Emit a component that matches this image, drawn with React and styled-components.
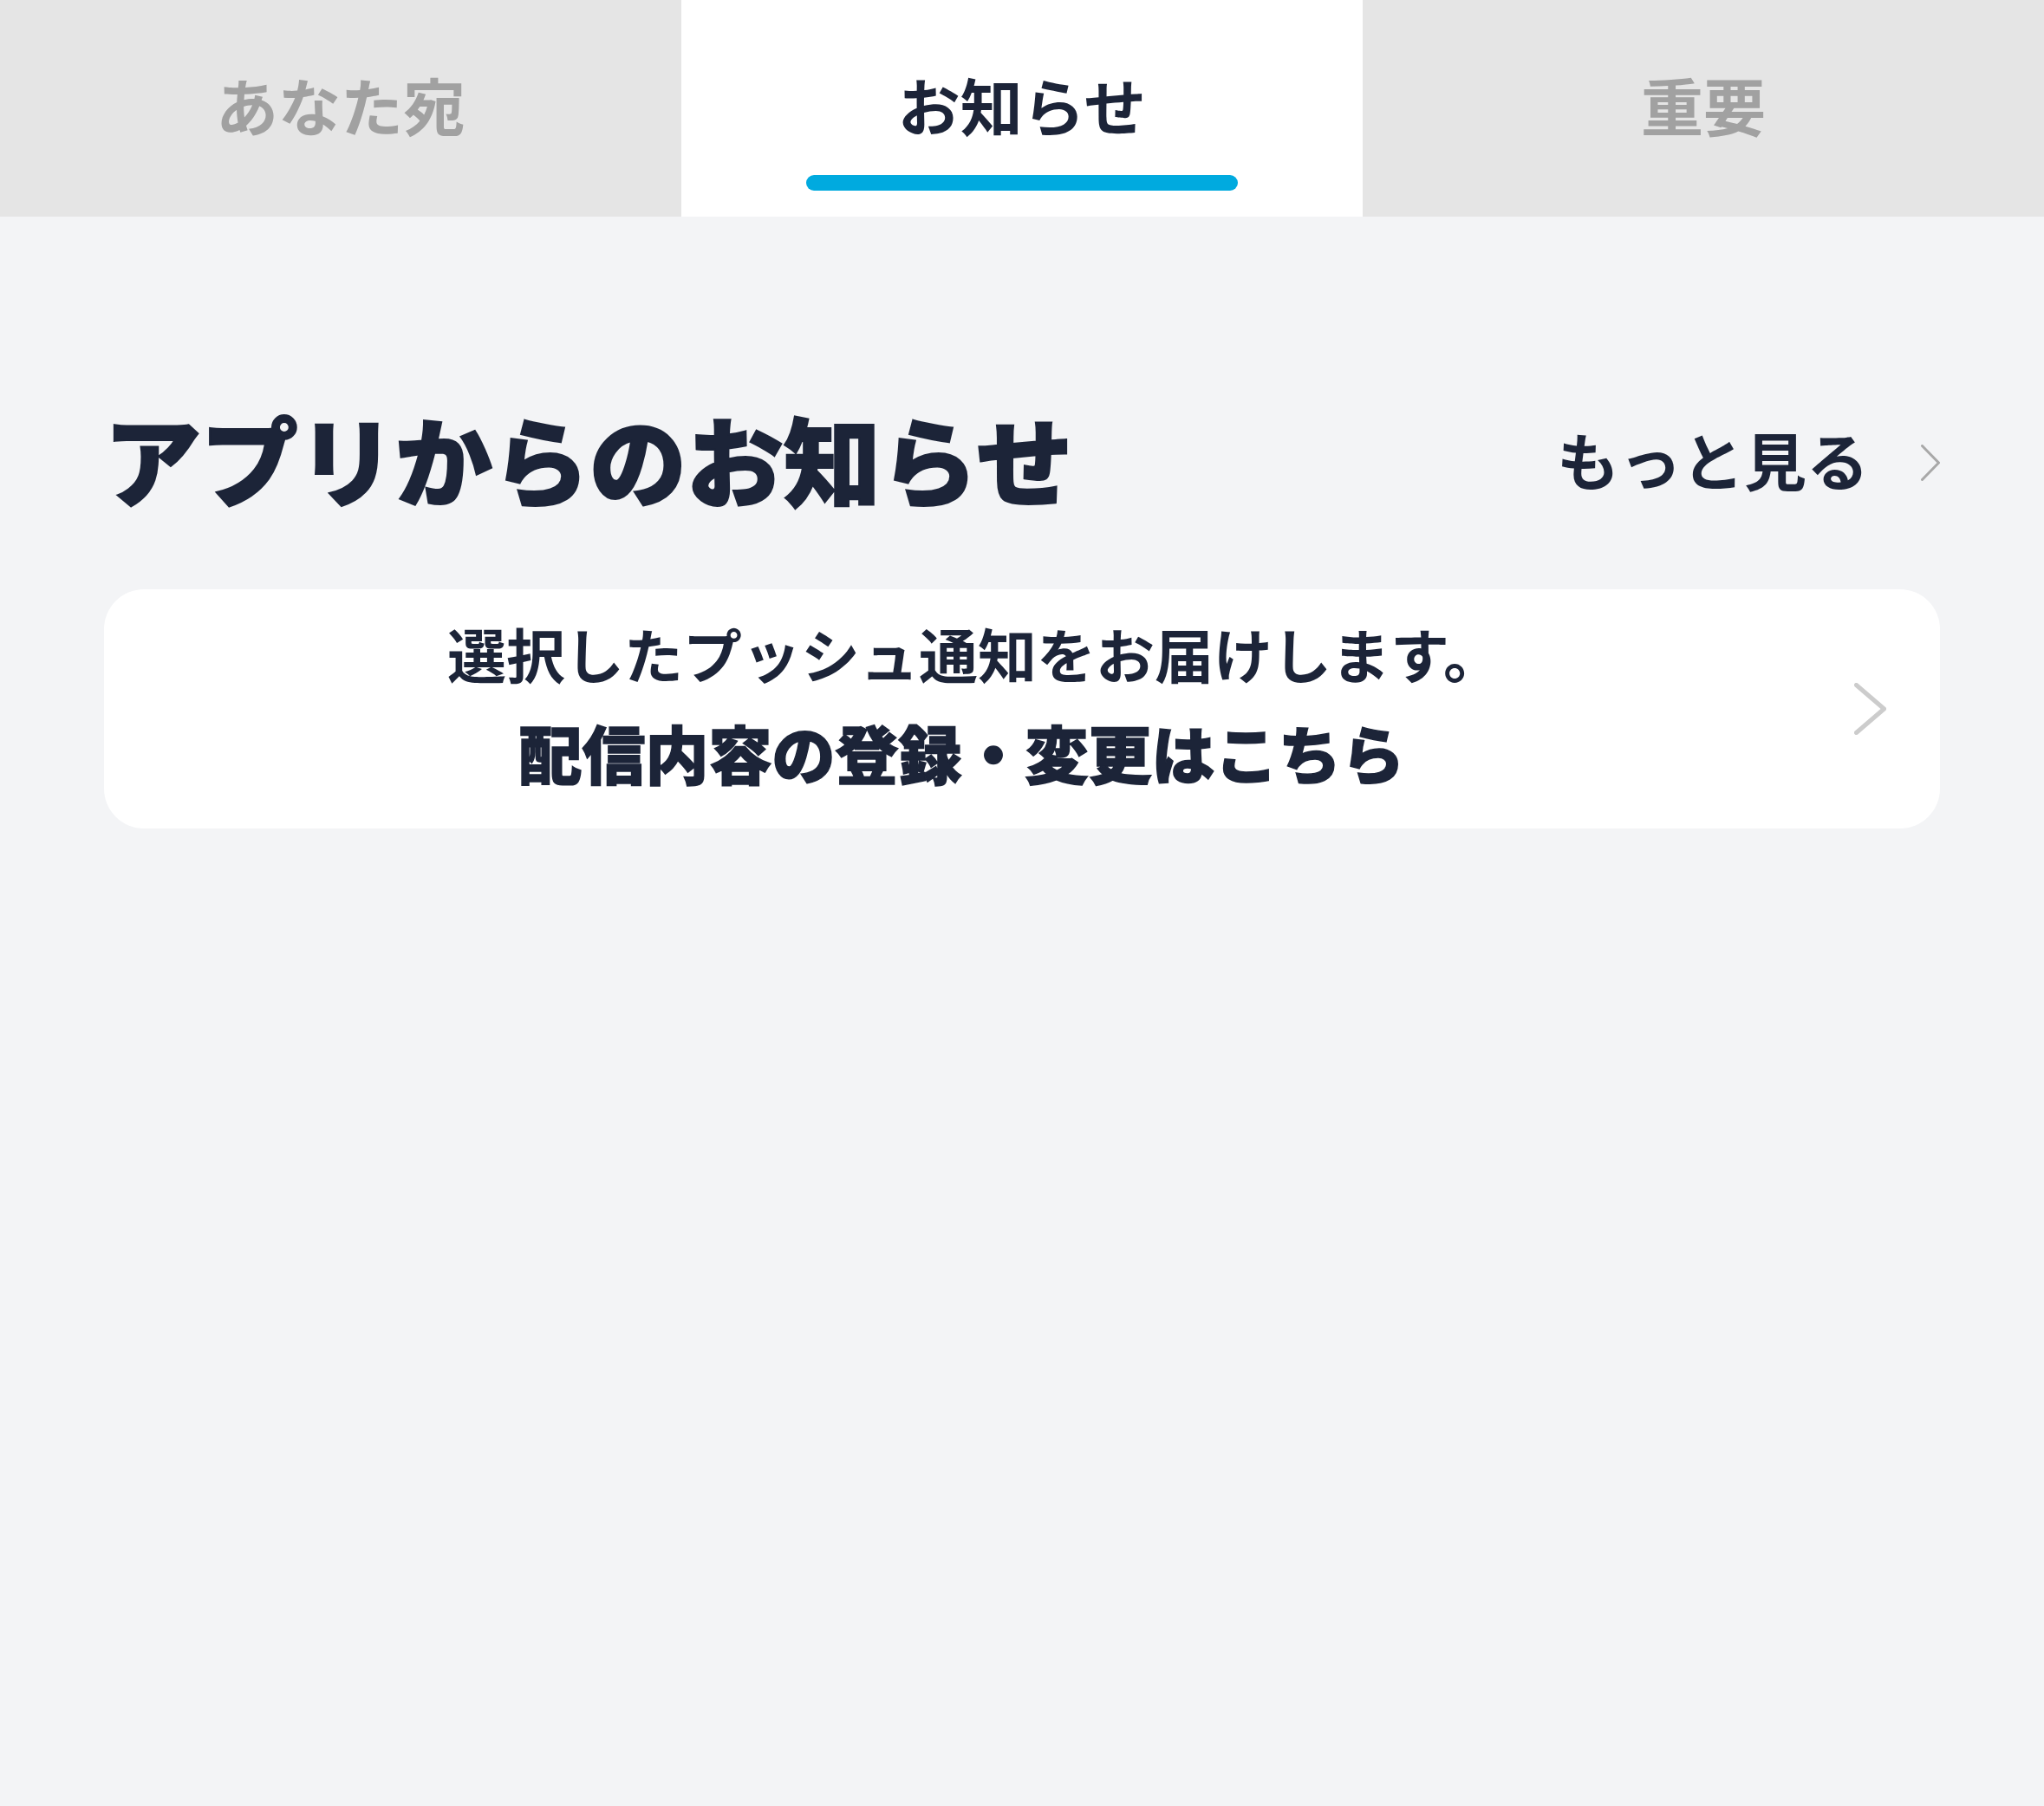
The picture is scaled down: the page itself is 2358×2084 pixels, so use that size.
import styled, { createGlobalStyle } from 'styled-components'
import { useState } from 'react'

const GlobalStyle = createGlobalStyle`
  html, body {
    margin: 0;
    padding: 0;
    background: #f3f4f6;
  }
  body {
    font-family: 'Noto Sans CJK JP', 'Noto Sans', sans-serif;
    color: #1c2438;
  }
`

const Page = styled.div`
  min-height: 2084px;
  background: #f3f4f6;
`

const TabBar = styled.nav`
  display: grid;
  grid-template-columns: repeat(3, 1fr);
  height: 250px;
`

const Tab = styled.button`
  position: relative;
  display: flex;
  align-items: flex-start;
  justify-content: center;
  padding: 84px 0 0;
  border: 0;
  margin: 0;
  font-family: inherit;
  font-size: 72px;
  font-weight: 700;
  line-height: 1;
  background: ${({ $active }) => ($active ? '#ffffff' : '#e5e5e5')};
  color: ${({ $active }) => ($active ? '#1c2438' : '#a1a1a1')};
  cursor: pointer;
`

const Indicator = styled.span`
  position: absolute;
  left: 50%;
  bottom: 30px;
  width: 498px;
  height: 18px;
  margin-left: -249px;
  border-radius: 9px;
  background: #00aadf;
`

const Content = styled.main`
  display: flex;
  flex-direction: column;
  gap: 87px;
  padding: 213px 120px 0;
`

const SectionHeader = styled.div`
  display: flex;
  align-items: center;
  justify-content: space-between;
  height: 130px;
`

const Title = styled.h1`
  margin: 0;
  font-size: 112px;
  font-weight: 900;
  line-height: 1;
  -webkit-text-stroke: 2px #1c2438;
`

const MoreLink = styled.a`
  display: flex;
  align-items: center;
  gap: 60px;
  font-size: 72px;
  font-weight: 700;
  color: #1c2438;
  text-decoration: none;

  svg {
    margin-top: 12px;
  }
`

const Card = styled.a`
  display: flex;
  align-items: center;
  height: 276px;
  padding: 0 62px 0 0;
  gap: 40px;
  border-radius: 46px;
  background: #ffffff;
  color: #1c2438;
  text-decoration: none;
`

const CardText = styled.div`
  flex: 1;
  display: flex;
  flex-direction: column;
  align-items: center;
  gap: 26px;
  margin-bottom: 14px;
`

const Lead = styled.p`
  margin: 0;
  padding-left: 30px;
  font-size: 68px;
  font-weight: 700;
  line-height: 1.3;
`

const Action = styled.p`
  margin: 0;
  font-size: 73px;
  font-weight: 900;
  line-height: 1.2;
  -webkit-text-stroke: 1.5px #1c2438;
`

const Chevron = ({ width, height, color, stroke }) => (
  <svg width={width} height={height} viewBox={`0 0 ${width} ${height}`} fill="none">
    <path
      d={`M${stroke / 2} ${stroke / 2} L${width - stroke / 2} ${height / 2} L${stroke / 2} ${height - stroke / 2}`}
      stroke={color}
      strokeWidth={stroke}
      strokeLinecap="round"
      strokeLinejoin="round"
    />
  </svg>
)

const tabs = [
  { id: 'you', label: 'あなた宛' },
  { id: 'news', label: 'お知らせ' },
  { id: 'important', label: '重要' },
]

export default function App() {
  const [activeTab, setActiveTab] = useState('news')

  return (
    <Page>
      <GlobalStyle />
      <TabBar>
        {tabs.map((tab) => (
          <Tab
            key={tab.id}
            $active={activeTab === tab.id}
            onClick={() => setActiveTab(tab.id)}
          >
            {tab.label}
            {activeTab === tab.id && <Indicator />}
          </Tab>
        ))}
      </TabBar>

      <Content>
        <SectionHeader>
          <Title>アプリからのお知らせ</Title>
          <MoreLink href="#">
            もっと見る
            <Chevron width={22} height={42} color="#a8a8a8" stroke={3} />
          </MoreLink>
        </SectionHeader>

        <Card href="#">
          <CardText>
            <Lead>選択したプッシュ通知をお届けします。</Lead>
            <Action>配信内容の登録・変更はこちら</Action>
          </CardText>
          <Chevron width={37} height={60} color="#cccccc" stroke={5} />
        </Card>
      </Content>
    </Page>
  )
}
